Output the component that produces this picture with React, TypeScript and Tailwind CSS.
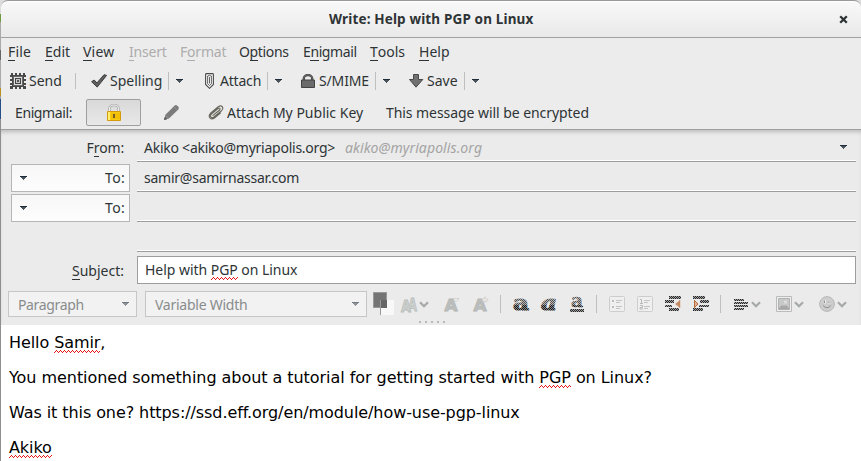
import type { ReactNode } from 'react';

const ui = "font-['Noto_Sans','Open_Sans',sans-serif]";

function Caret({ className = '' }: { className?: string }) {
  return (
    <svg width="7" height="4" viewBox="0 0 7 4" shapeRendering="crispEdges" className={`shrink-0 ${className}`}>
      <path d="M0 0h7v1H0z" fill="#1d2c38" />
      <path d="M1 1h5v1H1zM2 2h3v1H2zM3 3h1v1H3z" fill="#4a545c" />
    </svg>
  );
}

function Chevron({ className = '' }: { className?: string }) {
  return (
    <svg width="10" height="7" viewBox="0 0 10 7" className={`shrink-0 ${className}`}>
      <path d="M1 1.2l4 4 4-4" fill="none" stroke="#a6a9a9" strokeWidth="2.2" />
    </svg>
  );
}

function Sep({ className = '' }: { className?: string }) {
  return <span className={`w-px shrink-0 bg-[#bfbfbf] ${className}`} />;
}

function Label({ className = '', children }: { className?: string; children: ReactNode }) {
  return <span className={`shrink-0 whitespace-nowrap ${className}`}>{children}</span>;
}

function Key({ children }: { children: ReactNode }) {
  return <span className="inline-block h-[17px] leading-[15px] shadow-[inset_0_-1px_0_currentColor]">{children}</span>;
}

function Misspelled({ children }: { children: ReactNode }) {
  return (
    <span className="relative inline-block">
      {children}
      <svg className="absolute bottom-[-1px] left-0 h-[3px] w-full" shapeRendering="crispEdges">
        <defs>
          <pattern id="wave" width="4" height="3" patternUnits="userSpaceOnUse">
            <path d="M0 2h1v1H0zM1 1h1v1H1zM2 0h1v1H2zM3 1h1v1H3z" fill="#e51515" />
          </pattern>
        </defs>
        <rect width="100%" height="3" fill="url(#wave)" />
      </svg>
    </span>
  );
}

function SendIcon() {
  return (
    <svg width="16" height="16" viewBox="0 0 16 16" shapeRendering="crispEdges" className="shrink-0">
      <path
        d="M1 0h2v2h2V0h2v2h2V0h2v2h2V0h2v2h1v2h-2v2h2v2h-2v2h2v2h-2v1h2v3h-3v-2h-2v2H9v-2H7v2H5v-2H3v2H0v-3h2v-1H0v-2h2V8H0V6h2V4H0V2h1z"
        fill="#484848"
      />
      <path d="M3 3h10v10H3z" fill="#666" />
      <path d="M4 4h8v8H4z" fill="#dedede" />
      <path d="M5 5h6v6H5z" fill="#444" />
      <path d="M6 6h4v4H6z" fill="#c8c8c8" />
      <path d="M7 7h2v2H7z" fill="#555" />
    </svg>
  );
}

function CheckIcon() {
  return (
    <svg width="16" height="14" viewBox="0 0 16 14" className="shrink-0">
      <path d="M.6 7.7L3.2 6l2.7 3L13 .7l2.6.7L6.2 13.1z" fill="#606060" stroke="#3d3d3d" strokeLinejoin="round" />
    </svg>
  );
}

function AttachIcon() {
  return (
    <svg width="9" height="16" viewBox="0 0 9 16" className="shrink-0">
      <path d="M.6 1.5Q.6.6 1.5.6h6q.9 0 .9.9v10L4.5 15.3.6 11.5z" fill="#f4f4f4" stroke="#4a4a4a" strokeWidth="1.1" />
      <path d="M2.6 3v7.8l1.9 1.7 1.9-1.7V3q-1.9-1.4-3.8 0M4.5 4v6.5" fill="none" stroke="#555" strokeWidth=".9" />
    </svg>
  );
}

function SmimeIcon() {
  return (
    <svg width="14" height="14" viewBox="0 0 14 14" className="shrink-0">
      <path d="M2.8 7V4.6a4.2 3.6 0 018.4 0V7" fill="none" stroke="#484848" strokeWidth="2.4" />
      <path d="M2.8 7V4.6a4.2 3.6 0 018.4 0V7" fill="none" stroke="#777" strokeWidth=".7" />
      <path d="M.5 6h13v7.5H.5z" fill="#6b6b6b" stroke="#434343" />
    </svg>
  );
}

function SaveIcon() {
  return (
    <svg width="15" height="14" viewBox="0 0 15 14" className="shrink-0">
      <path d="M4.5.5h5v5h4.3L7 13.2.5 5.5h4z" fill="#707070" stroke="#484848" strokeLinejoin="round" />
    </svg>
  );
}

function GoldLock() {
  return (
    <svg width="16" height="17" viewBox="0 0 16 17" className="shrink-0">
      <path d="M3.4 9V5a4.6 4 0 019.2 0v4" fill="none" stroke="#a9a9a9" strokeWidth="2.6" />
      <path d="M3.4 9V5a4.6 4 0 019.2 0v4" fill="none" stroke="#f2f2f2" strokeWidth="1.1" />
      <path d="M1.5 7.5h13v9h-13z" fill="#f7c90f" stroke="#d59a10" />
      <path d="M2 8h2v8H2z" fill="#fff06c" />
      <path d="M5 10h9M5 12h9M5 14h9" stroke="#edb400" />
      <path d="M7 10h2v4H7z" fill="#77602b" />
    </svg>
  );
}

function PencilIcon() {
  return (
    <svg width="17" height="17" viewBox="0 0 17 17" className="shrink-0">
      <path d="M1 16l1.4-5.3L11.7 1.5Q13 .5 14.3 1.8l1 1q1.2 1.3 0 2.6L6 14.5z" fill="#7b7b7b" />
      <path d="M2.2 11L6 14.7M10.7 2.6l3.8 3.8" stroke="#a3a3a3" strokeWidth=".6" />
      <path d="M1 16l.8-3 2.2 2.2z" fill="#555" />
    </svg>
  );
}

function ClipIcon() {
  return (
    <svg width="17" height="15" viewBox="0 0 17 15" className="shrink-0">
      <path
        d="M5 10.4l6.3-5.2c1.5-1.2.2-2.9-1.3-1.7L3.4 9c-2.2 2.2.1 4.8 2.5 3l7.6-6.3c3.2-3-.2-6.2-3.3-3.9L2.6 8.1C-.6 11.5 2.8 15.6 6.400 13l6-5"
        fill="none"
        stroke="#68685d"
        strokeWidth="1.15"
        strokeLinecap="round"
      />
    </svg>
  );
}

function Stipples() {
  return (
    <defs>
      <pattern id="stipple" width="2" height="2" patternUnits="userSpaceOnUse">
        <path d="M0 0h2v2H0z" fill="#a0a0a0" />
        <path d="M0 0h1v1H0zM1 1h1v1H1z" fill="#282828" />
      </pattern>
      <pattern id="stipple-fade" width="2" height="18" patternUnits="userSpaceOnUse">
        <path d="M0 0h2v10H0z" fill="#b4b4b4" />
        <path d="M0 10h2v8H0z" fill="#858585" />
        <path d="M0 0h1v1H0zM1 1h1v1H1zM0 2h1v1H0zM1 3h1v1H1zM0 4h1v1H0zM1 5h1v1H1zM0 6h1v1H0zM1 7h1v1H1zM0 8h1v1H0zM1 9h1v1H1z" fill="#505050" />
        <path d="M0 10h1v1H0zM1 11h1v1H1zM0 12h1v1H0zM1 13h1v1H1zM0 14h1v1H0zM1 15h1v1H1zM0 16h1v1H0zM1 17h1v1H1z" fill="#1c1c1c" />
      </pattern>
    </defs>
  );
}

function StyleLetter({ kind }: { kind: 'bold' | 'italic' | 'underline' }) {
  const underlined = kind === 'underline';
  return (
    <svg width="17" height="18" viewBox="0 0 17 18" className="shrink-0 overflow-visible">
      <Stipples />
      <text
        x={underlined ? 2 : 0}
        y={underlined ? 12 : 14.5}
        textLength={underlined ? 12 : 16}
        lengthAdjust="spacingAndGlyphs"
        fontFamily="DejaVu Serif, serif"
        fontWeight="bold"
        fontStyle={kind === 'italic' ? 'italic' : 'normal'}
        fontSize={underlined ? 19 : 20}
        fill="url(#stipple-fade)"
        stroke="url(#stipple-fade)"
        strokeWidth={underlined ? 0.5 : 1}
      >
        a
      </text>
      {underlined && <path d="M1 14h14v3H1z" fill="url(#stipple)" shapeRendering="crispEdges" />}
    </svg>
  );
}

function FadedLetter({ mark }: { mark: 'down' | 'up' }) {
  return (
    <svg width="16" height="16" viewBox="0 0 16 16" className="shrink-0 overflow-visible">
      <text
        x="0.500"
        y="15"
        fontFamily="DejaVu Sans, sans-serif"
        fontWeight="bold"
        fontSize="16.5"
        textLength="13"
        lengthAdjust="spacingAndGlyphs"
        fill="#bcbfbe"
        stroke="#b5b8b7"
        strokeWidth="1"
      >
        A
      </text>
      {mark === 'down' ? (
        <path d="M9 2.500h6l-3 3.300z" fill="#eee" stroke="#cbc7c1" strokeWidth=".7" />
      ) : (
        <path d="M12 .8l3.200 3.200-1.600 1.800h-3.200L8.800 4z" fill="#e4e3e1" stroke="#cbc7c1" strokeWidth=".7" />
      )}
    </svg>
  );
}

function FontSizeIcon() {
  return (
    <svg width="18" height="16" viewBox="0 0 18 16" className="shrink-0 overflow-visible">
      <g fontFamily="DejaVu Sans, sans-serif" fontWeight="bold" fill="#ccd0ce" stroke="#b9bdbb" strokeWidth=".8">
        <text x="7" y="14.500" fontSize="18" textLength="9" lengthAdjust="spacingAndGlyphs">A</text>
        <text x="0" y="15.500" fontSize="15" textLength="10" lengthAdjust="spacingAndGlyphs">A</text>
      </g>
    </svg>
  );
}

function ListIcon({ numbered = false }: { numbered?: boolean }) {
  return (
    <svg width="16" height="16" viewBox="0 0 16 16" className="shrink-0">
      <rect x=".5" y=".5" width="15" height="15" rx="1" fill="#efefef" stroke="#cdcdcd" />
      <path d="M7 4.5h6M7 6.5h4M7 10.5h6M7 12.5h4" stroke="#c4c4c4" />
      {numbered ? (
        <path d="M3 3.5h1.5v4M3 7.5h3M3 9.5h2.5v2H3v1.5h3" fill="none" stroke="#b9b9b9" />
      ) : (
        <path d="M3 4h2v2H3zM3 10h2v2H3z" fill="#bcbcbc" />
      )}
    </svg>
  );
}

function IndentIcon({ out = false }: { out?: boolean }) {
  return (
    <svg width="16" height="16" viewBox="0 0 16 16" shapeRendering="crispEdges" className="shrink-0">
      <Stipples />
      {out ? (
        <>
          <path d="M4 0h12v3H4zM0 4h9v3H0zM0 9h7v2H0zM4 12h10v3H4z" fill="url(#stipple)" />
          <path d="M15 4v8l-5-4z" fill="#c58a63" stroke="#ddc0ad" strokeWidth=".5" />
        </>
      ) : (
        <>
          <path d="M0 0h12v3H0zM7 4h9v3H7zM6 9h10v2H6zM0 12h10v3H0z" fill="url(#stipple)" />
          <path d="M1 4v8l4-4z" fill="#dfb393" stroke="#b76d3b" />
        </>
      )}
    </svg>
  );
}

function AlignIcon() {
  return (
    <svg width="14" height="11" viewBox="0 0 14 11" shapeRendering="crispEdges" className="shrink-0">
      <Stipples />
      <path d="M0 0h10v2H0zM0 3h14v2H0zM0 6h14v2H0zM0 9h10v2H0z" fill="url(#stipple)" />
    </svg>
  );
}

function ImageIcon() {
  return (
    <svg width="16" height="16" viewBox="0 0 16 16" className="shrink-0">
      <path d="M.5.5h15v15H.5z" fill="#efefef" stroke="#bbb" />
      <path d="M2.5 2.5h11v11h-11z" fill="#c7c9c9" stroke="#b2b2b2" />
      <path d="M3 12l3-3 2 1 2-1 3 3v1H3z" fill="#a7a7a7" />
      <circle cx="9.5" cy="6" r="1.7" fill="#dedede" />
    </svg>
  );
}

function SmileyIcon() {
  return (
    <svg width="16" height="16" viewBox="0 0 16 16" className="shrink-0">
      <circle cx="8" cy="8" r="7.4" fill="#cdcdcd" stroke="#b7b7b7" />
      <path d="M5 4h2v3.5H5zM9 4h2v3.5H9z" fill="#eee" />
      <path d="M5.5 4.5v2.5M10 4.5v2.5M3.8 9.2q4.2 5 8.4 0" fill="none" stroke="#8f8f8f" />
    </svg>
  );
}

function AddressLine({ children }: { children?: ReactNode }) {
  return (
    <div className="ml-[7px] mr-[5px] flex h-[30px] min-w-0 flex-1 items-center border-b border-[#9d9d9d] pl-[7px] pt-[2px] shadow-[inset_0_-1px_0_#fff]">
      {children}
    </div>
  );
}

function RecipientButton() {
  return (
    <div className="ml-[10px] mt-[2px] flex h-[28px] w-[119px] items-center border border-[#b6b6b6] bg-gradient-to-b from-[#f7f7f7] to-[#fdfdfd] pl-2 pr-[4px]">
      <Caret />
      <span className="ml-auto pb-px tracking-[0.3px]">To:</span>
    </div>
  );
}

export default function App() {
  return (
    <div className={`flex h-[461px] w-[861px] overflow-hidden bg-[#ececec] text-[14px] text-[#2e3436] ${ui}`}>
      <div className="w-px shrink-0 bg-[linear-gradient(#ddd_0_14px,#6d9b3f_14px_22px,#aaa_22px_50px,#666_50px_60px,#aaa_60px_88px,#b99020_88px_96px,#999_96px_99px,#264f87_99px_119px,#8e8e8e_119px)]" />
      <div className="flex w-[860px] flex-col">
        <div className="h-[38px] bg-[#ddd]">
          <header className="flex h-[38px] items-center rounded-t-[7px] border-b border-t border-b-[#a1a1a1] border-t-[#999] bg-gradient-to-b from-[#f9f9f9] to-[#e9e9e9] shadow-[inset_0_1px_0_#fff]">
            <Label className="ml-[328px] w-[204px] text-[13.5px] font-bold tracking-[0.15px]">Write: Help with PGP on Linux</Label>
            <svg width="9" height="9" viewBox="0 0 9 9" className="ml-auto mr-[13px]">
              <path d="M1.2 1.2l6.6 6.6M7.8 1.2L1.2 7.8" stroke="#2e3436" strokeWidth="2.3" />
            </svg>
          </header>
        </div>

        <nav className="flex h-[28px] items-center pb-[2px] pl-[7px]">
          <Label className="w-[37px] tracking-[0.2px]"><Key>F</Key>ile</Label>
          <Label className="w-[38px]"><Key>E</Key>dit</Label>
          <Label className="w-[46px] tracking-[0.2px]"><Key>V</Key>iew</Label>
          <Label className="w-[51px] tracking-[-0.2px] text-[#adadad]"><Key>I</Key>nsert</Label>
          <Label className="w-[59px] tracking-[-0.2px] text-[#adadad]">F<Key>o</Key>rmat</Label>
          <Label className="w-[64px] tracking-[-0.35px]">O<Key>p</Key>tions</Label>
          <Label className="w-[67px] tracking-[-0.4px]">E<Key>n</Key>igmail</Label>
          <Label className="w-[49px]"><Key>T</Key>ools</Label>
          <Label className="w-[40px]"><Key>H</Key>elp</Label>
        </nav>

        <div className="flex h-[30px] items-center pl-[9px]">
          <SendIcon />
          <Label className="ml-[3px] w-[46px] pb-px">Send</Label>
          <Sep className="h-4" />
          <span className="w-[15px]" />
          <CheckIcon />
          <Label className="ml-[3px] w-[58px] pb-px">Spelling</Label>
          <Sep className="h-[18px]" />
          <Caret className="ml-[7px] mr-[22px]" />
          <AttachIcon />
          <Label className="ml-[6px] w-[47px] pb-px tracking-[-0.2px]">Attach</Label>
          <Sep className="h-[18px]" />
          <Caret className="ml-[7px] mr-[19px]" />
          <SmimeIcon />
          <Label className="ml-[4px] w-[56px] pb-px tracking-[-0.15px]">S/MIME</Label>
          <Sep className="h-[18px]" />
          <Caret className="ml-[7px] mr-[19px]" />
          <SaveIcon />
          <Label className="ml-[3px] w-[37px] pb-px">Save</Label>
          <Sep className="h-[18px]" />
          <Caret className="ml-[7px]" />
        </div>

        <div className="flex h-[34px] items-center border-b border-[#a0a0a0] pl-[14px]">
          <Label className="w-[71px] pb-px tracking-[-0.4px]">Enigmail:</Label>
          <div className="flex h-[27px] w-[55px] items-center justify-center rounded-[2px] border border-[#9f9f9f] bg-gradient-to-b from-[#d9d9d9] to-[#e8e8e8]">
            <GoldLock />
          </div>
          <span className="w-[22px]" />
          <PencilIcon />
          <span className="w-[28px]" />
          <ClipIcon />
          <Label className="ml-[2px] w-[159px]">Attach My Public Key</Label>
          <Label className="w-[203px] pb-px tracking-[-0.06px]">This message will be encrypted</Label>
        </div>

        <div className="flex h-[195px] flex-col bg-[#ebebeb] shadow-[inset_0_4px_4px_-2px_#bbb]">
          <div className="mt-[2px] flex h-[30px]">
            <span className="flex w-[129px] items-center justify-end pr-[6px] pt-px"><Label className="tracking-[-0.2px]">F<Key>r</Key>om:</Label></span>
            <AddressLine>
              <Label className="w-[201px] tracking-[-0.25px]">Akiko &lt;akiko@myriapolis.org&gt;</Label>
              <Label className="italic tracking-[0.1px] text-[#a4a4a4]">akiko@myriapolis.org</Label>
              <Caret className="mb-[2px] ml-auto mr-[9px]" />
            </AddressLine>
          </div>
          <div className="flex h-[30px]">
            <RecipientButton />
            <AddressLine><Label className="tracking-[-0.24px]">samir@samirnassar.com</Label></AddressLine>
          </div>
          <div className="flex h-[30px]">
            <RecipientButton />
            <AddressLine />
          </div>
          <div className="flex h-[30px] pl-[129px]">
            <AddressLine />
          </div>
          <div className="mt-[4px] flex h-[28px] items-center">
            <span className="flex w-[129px] justify-end pr-[6px]"><Label>
              <Key>S</Key>ubject:</Label></span>
            <div className="ml-[7px] mr-[5px] flex h-[28px] flex-1 items-center border border-[#9d9d9d] bg-white pl-[7px]">
              <Label className="leading-[18px] tracking-[-0.04px]">Help with <Misspelled>PGP</Misspelled> on Linux</Label>
            </div>
          </div>

          <div className="relative flex h-[41px] items-center pb-px pl-[7px]">
            <div className="flex h-[26px] w-[129px] shrink-0 items-center border border-[#c6c6c6] bg-[#f2f2f2] pl-[9px] pr-[7px] text-[#898c8c]">
              <Label className="tracking-[-0.35px]">Paragraph</Label><Caret className="ml-auto opacity-60" />
            </div>
            <div className="ml-[8px] flex h-[26px] w-[222px] shrink-0 items-center border border-[#c6c6c6] bg-[#f2f2f2] pl-[9px] pr-[7px] text-[#898c8c]">
              <Label className="tracking-[-0.25px]">Variable Width</Label><Caret className="ml-auto opacity-60" />
            </div>
            <svg width="21" height="24" viewBox="0 0 21 24" shapeRendering="crispEdges" className="ml-[6px] shrink-0">
              <path d="M7 8h14v15H7z" fill="#f8f8f8" />
              <path d="M.5.5h13v15H.5z" fill="#747474" stroke="#999" />
              <path d="M7 8h7v8H7z" fill="#666" />
              <path d="M7 8h1v15H7z" fill="#999" />
            </svg>
            <span className="ml-[7px] flex items-center"><FontSizeIcon /><Chevron /></span>
            <span className="w-[15px]" />
            <FadedLetter mark="down" />
            <span className="w-[13px]" />
            <FadedLetter mark="up" />
            <Sep className="ml-[11px] mr-[12px] h-[18px]" />
            <StyleLetter kind="bold" />
            <span className="w-[11px]" />
            <StyleLetter kind="italic" />
            <span className="w-[11px]" />
            <StyleLetter kind="underline" />
            <Sep className="ml-[10px] mr-[12px] h-[18px]" />
            <ListIcon />
            <span className="w-[12px]" />
            <ListIcon numbered />
            <span className="w-[12px]" />
            <IndentIcon out />
            <span className="w-[12px]" />
            <IndentIcon />
            <Sep className="ml-[11px] mr-[13px] h-[18px]" />
            <AlignIcon />
            <Chevron className="ml-[3px] mr-[15px]" />
            <ImageIcon />
            <Chevron className="ml-[2px] mr-[15px]" />
            <SmileyIcon />
            <Chevron className="ml-[2px]" />
            <div className="absolute bottom-[2px] left-[418px] flex gap-[4px]">
              {[0, 1, 2, 3, 4].map((i) => (
                <i key={i} className="size-[2px] bg-[#b9b9b9]" />
              ))}
            </div>
          </div>
        </div>

        <main className="flex h-[136px] flex-col gap-4 bg-white pl-2 pt-[8px] font-['DejaVu_Sans',sans-serif] text-[16px] leading-[19px] tracking-[-0.08px] text-black">
          <p>Hello <Misspelled>Samir</Misspelled>,</p>
          <p className="tracking-[-0.05px]">You mentioned something about a tutorial for getting started with <Misspelled>PGP</Misspelled> on Linux?</p>
          <p>Was it this one? https://ssd.eff.org/en/module/how-use-pgp-linux</p>
          <p><Misspelled>Akiko</Misspelled></p>
        </main>
      </div>
    </div>
  );
}
